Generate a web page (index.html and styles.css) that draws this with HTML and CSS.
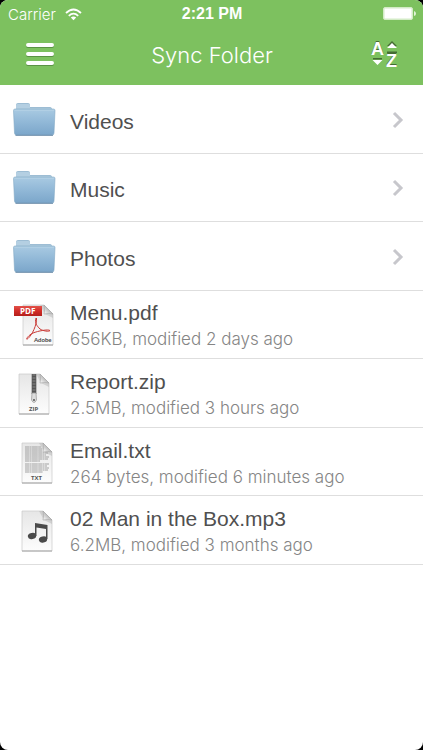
FILE: index.html
```
<!DOCTYPE html>
<html lang="en">
<head>
<meta charset="utf-8">
<meta name="viewport" content="width=device-width, initial-scale=1">
<title>Sync Folder</title>
<link rel="stylesheet" href="styles.css">
</head>
<body>
<svg class="defs" aria-hidden="true">
  <defs>
    <linearGradient id="blue" x2="0" y2="1"><stop offset="0" stop-color="#a9cae2"/><stop offset=".5" stop-color="#91b8d7"/><stop offset="1" stop-color="#7ba6ca"/></linearGradient>
    <linearGradient id="paper" x2="0" y2="1"><stop offset="0" stop-color="#e6e6e6"/><stop offset="1" stop-color="#fdfdfd"/></linearGradient>
    <linearGradient id="fold" x1="0" y1="1" x2="1" y2="0"><stop offset="0" stop-color="#fff"/><stop offset=".5" stop-color="#bcbcbc"/><stop offset="1" stop-color="#eee"/></linearGradient>
    <linearGradient id="red" x2="0" y2="1"><stop offset="0" stop-color="#e2524a"/><stop offset=".5" stop-color="#d22c27"/><stop offset="1" stop-color="#b3201c"/></linearGradient>
    <symbol id="folder" viewBox="0 0 44 38">
      <path d="M4 34V4q0-2 2-2h10q2 0 2 2v2h20q2 0 2 3v25z" fill="#9dbdd4"/>
      <path d="M4 7V4.500q0-1.500 1.500-1.500H16.500q1.500 0 1.500 1.500V7H38q2 0 2 2v2H4z" fill="#b4cfe2"/>
      <path d="M1.500 9.500q0-1.500 1.500-1.500h38.500q1.500 0 1.500 1.500L42 32q0 2-2 2H4.500q-2 0-2-2z" fill="url(#blue)" stroke="#82a8c5" stroke-width=".6"/>
      <path d="M2.500 9.300H42" stroke="#b5d1e5"/>
      <path d="M3.500 34.300H41" stroke="#6c8da9"/>
    </symbol>
    <symbol id="page" viewBox="0 0 32 42">
      <path d="M1 1H22L31 10V41H1z" fill="url(#paper)" stroke="#c9c9c9" stroke-width=".7"/>
      <path d="M1 41H31" stroke="#a2a2a2"/>
      <path d="M18 1H22L31 10V14L23 10z" fill="#aaa" opacity=".4"/>
      <path d="M22 1Q23 6 22 10Q27 9 31 10z" fill="url(#fold)" stroke="#a2a2a2" stroke-width=".6"/>
    </symbol>
  </defs>
</svg>
<div class="screen">
  <header class="top">
    <div class="status">
      <span class="carrier">Carrier
        <svg width="17" height="13" viewBox="0 0 17 13" aria-hidden="true"><g fill="none" stroke="#fff" stroke-width="1.800"><path d="M1 5Q8.500-2 16 5"/><path d="M3.800 7.800Q8.500 3.400 13.200 7.800"/></g><path d="M5.800 9.600Q8.500 7.200 11.200 9.600L8.500 12.300z" fill="#fff"/></svg>
      </span>
      <time class="clock">2:21 PM</time>
      <svg class="battery" width="33" height="14" viewBox="0 0 33 14" role="img" aria-label="Battery full"><rect x=".5" y=".5" width="29" height="12" rx="1.500" fill="#d3ebc6" stroke="#d3ebc6"/><rect x="1.500" y="1.500" width="27" height="10" fill="#fff"/><path d="M31 4q2 .5 2 2.500T31 9z" fill="#e3f3da"/></svg>
    </div>
    <div class="bar">
      <button class="icon-button" aria-label="Menu">
        <svg width="28" height="26" viewBox="0 0 28 26"><g stroke-width="4" stroke-linecap="round"><path d="M2 4H26M2 13H26M2 22H26" stroke="#5a9344"/><path d="M2 3H26M2 12H26M2 21H26" stroke="#fff"/></g></svg>
      </button>
      <h1>Sync Folder</h1>
      <button class="icon-button" aria-label="Sort by name">
        <svg width="30" height="34" viewBox="0 -2 30 34"><g class="az" fill="#456c34"><text x="1" y="14">A</text><text x="16" y="26">Z</text><path d="M17 6L22 1L27 6zM17 11.500H27V13H17zM3 18H12V19.500H3z"/></g><g class="az" fill="#fff"><text x="1" y="15">A</text><text x="16" y="27">Z</text><path d="M17 8L22 3L27 8zM2.500 20H12.500L7.500 25z"/></g></svg>
      </button>
    </div>
  </header>
  <main>
    <ul class="files">
      <li><a class="row" href="#videos"><svg class="folder"><use href="#folder"/></svg><span class="name">Videos</span><svg class="chevron" viewBox="0 0 12 18"><path d="M2 2L9 9L2 16"/></svg></a></li>
      <li><a class="row" href="#music"><svg class="folder"><use href="#folder"/></svg><span class="name">Music</span><svg class="chevron" viewBox="0 0 12 18"><path d="M2 2L9 9L2 16"/></svg></a></li>
      <li><a class="row" href="#photos"><svg class="folder"><use href="#folder"/></svg><span class="name">Photos</span><svg class="chevron" viewBox="0 0 12 18"><path d="M2 2L9 9L2 16"/></svg></a></li>
      <li><a class="row" href="#menu">
        <svg class="doc" viewBox="0 0 44 42"><use href="#page" x="10" width="32" height="42"/>
          <path d="M24 14C22.500 19 25 22 28 25C31 27 37 28 38 26.500C36 25 26 27 21 29C15 32 13 37 16 34.500C20 31 25 21 24.500 14" fill="none" stroke="#ca3a36"/>
          <rect x="2" y="2" width="28" height="10" fill="url(#red)"/><text class="pdf" x="8" y="10">PDF</text><text class="adobe" x="22" y="38">Adobe</text></svg>
        <span class="text"><span class="name">Menu.pdf</span><span class="meta">656KB, modified 2 days ago</span></span></a></li>
      <li><a class="row" href="#report">
        <svg class="doc" viewBox="0 0 44 42"><use href="#page" x="6" width="32" height="42"/>
          <path d="M20 1H24V21H20z" fill="#555"/><path d="M22 1V21" stroke="#888" stroke-width="3" stroke-dasharray=".5 1"/><path d="M19.500 1V21M24.500 1V21" stroke="#999" stroke-width=".6"/><path d="M20 20H24L24.500 27Q22 32 19.500 27z" fill="#ddd" stroke="#888" stroke-width=".6"/><circle cx="22" cy="27" r="1" fill="#555"/><text class="tag" x="17" y="38">ZIP</text></svg>
        <span class="text"><span class="name">Report.zip</span><span class="meta">2.5MB, modified 3 hours ago</span></span></a></li>
      <li><a class="row" href="#email">
        <svg class="doc" viewBox="0 0 44 42"><use href="#page" x="9" width="32" height="42"/>
          <path d="M13 5H29M13 7H30M13 9H30M13 11H36M13 13H34M13 15H37M13 17H36M13 19H28M13 22H37M13 24H35M13 26H37M13 28H36M13 30H31" stroke="#999" stroke-width=".9" stroke-dasharray="4 .4 2 .4 6 .4"/><text class="tag" x="19" y="38">TXT</text></svg>
        <span class="text"><span class="name">Email.txt</span><span class="meta">264 bytes, modified 6 minutes ago</span></span></a></li>
      <li><a class="row" href="#box">
        <svg class="doc" viewBox="0 0 44 42"><use href="#page" x="9" width="32" height="42"/>
          <g fill="#4a4a4a"><path d="M23 13L35.500 15V29H34V19L24.500 17.500V26H23z"/><ellipse cx="20" cy="26" rx="4.200" ry="3" transform="rotate(-12 20 26)"/><ellipse cx="31" cy="29.500" rx="4.200" ry="3" transform="rotate(-12 31 29.500)"/></g></svg>
        <span class="text"><span class="name">02 Man in the Box.mp3</span><span class="meta">6.2MB, modified 3 months ago</span></span></a></li>
    </ul>
  </main>
</div>
</body>
</html>
```
FILE: styles.css
```
* { box-sizing: border-box; }
body {
  margin: 0;
  background: #000;
  font-family: "Liberation Sans", Arial, sans-serif;
  color: #505050;
}
.defs { position: absolute; width: 0; height: 0; }
.screen {
  min-height: 100vh;
  background: #fff;
  border-radius: 8px;
  overflow: hidden;
}
.top { background: #7dc15f; color: #fff; padding-bottom: 9px; }
.status {
  display: grid;
  grid-template-columns: 1fr auto 1fr;
  align-items: center;
  height: 28px;
  padding: 0 7px 0 8px;
  font-size: 16px;
}
.carrier {
  display: flex;
  align-items: center;
  gap: 9px;
  font: 300 15px Inter, sans-serif;
}
.clock { font-weight: bold; }
.battery { justify-self: end; }
.bar {
  display: flex;
  align-items: center;
  justify-content: space-between;
  height: 48px;
  padding: 6px 23px 0 26px;
}
h1 {
  margin: 0;
  font: 300 22px/28px Inter, sans-serif;
}
.icon-button { padding: 0; border: 0; background: none; }
.icon-button svg { display: block; overflow: visible; }
.az text { font: bold 18px "Liberation Sans", sans-serif; }
.files {
  display: grid;
  grid-auto-rows: 1fr;
  min-height: 64vh;
  margin: 0;
  padding: 0;
  list-style: none;
}
.files li { display: flex; border-bottom: 1px solid #dedede; }
.row {
  display: flex;
  flex: 1;
  align-items: center;
  gap: 14px;
  padding: 2px 19px 0 12px;
  color: inherit;
  text-decoration: none;
}
.folder { width: 44px; height: 38px; }
.doc { width: 44px; height: 42px; }
.row > .name { flex: 1; padding-top: 4px; }
.name { font-size: 21px; line-height: 26px; }
.text { display: flex; flex-direction: column; padding-top: 2px; }
.meta {
  font: 300 17px/26px Inter, sans-serif;
  color: #858585;
}
.chevron { width: 12px; height: 18px; fill: none; stroke: #c7c7cc; stroke-width: 3; }
.pdf { font: bold 8px "Open Sans", sans-serif; fill: #fff; }
.adobe { font: bold 6px Lato, sans-serif; fill: #444; }
.tag { font: bold 6px "Open Sans", sans-serif; fill: #555; }
```
